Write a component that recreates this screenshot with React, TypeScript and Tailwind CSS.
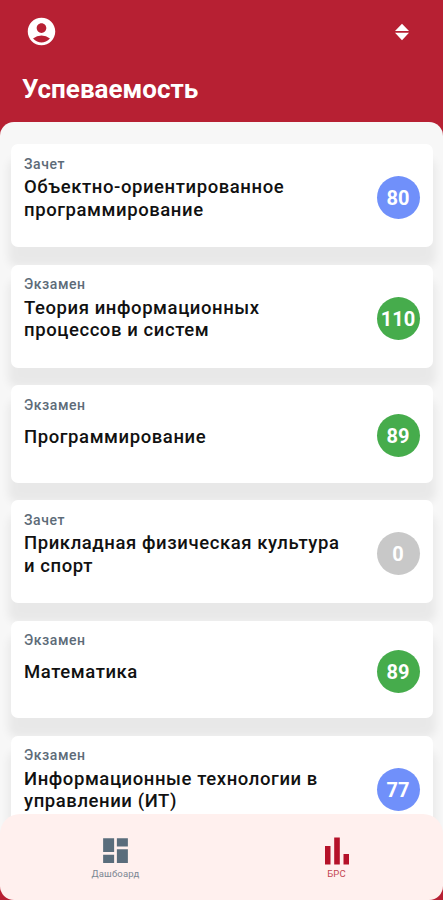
import { useState } from 'react';
import { clsx } from 'clsx';
import { MdAccountCircle, MdDashboard } from 'react-icons/md';

type Tab = 'dashboard' | 'brs';

interface Subject {
  id: number;
  control: 'Зачет' | 'Экзамен';
  lines: string[];
  score: number;
}

const subjects: Subject[] = [
  { id: 1, control: 'Зачет', lines: ['Объектно-ориентированное', 'программирование'], score: 80 },
  { id: 2, control: 'Экзамен', lines: ['Теория информационных', 'процессов и систем'], score: 110 },
  { id: 3, control: 'Экзамен', lines: ['Программирование'], score: 89 },
  { id: 4, control: 'Зачет', lines: ['Прикладная физическая культура', 'и спорт'], score: 0 },
  { id: 5, control: 'Экзамен', lines: ['Математика'], score: 89 },
  { id: 6, control: 'Экзамен', lines: ['Информационные технологии в', 'управлении (ИТ)'], score: 77 },
];

const scoreColor = (score: number) => {
  if (score === 0) return 'bg-[#c8c8c8]';
  return score > 80 ? 'bg-[#46ac4c]' : 'bg-[#7090fa]';
};

function SubjectCard({ subject }: { subject: Subject }) {
  const single = subject.lines.length === 1;

  return (
    <li
      className={clsx(
        'flex shrink-0 items-center justify-between rounded-[7px] bg-white pr-[13.5px] pl-[13px] shadow-[0_17px_8px_3px_rgba(0,0,0,0.06)]',
        single ? 'h-[97.5px]' : 'h-[103px]'
      )}
    >
      <div className="h-full pt-[10.5px]">
        <p className="text-[14px] leading-[18px] font-medium tracking-[0.57px] text-[#5d6b78]">{subject.control}</p>
        <h2 className={clsx('text-[18.5px] leading-[22.5px] font-medium tracking-[0.58px] text-[#111]', single ? 'pt-[12px]' : 'pt-[3.5px]')}>
          {subject.lines.map((line) => (
            <span key={line} className="block whitespace-nowrap">{line}</span>
          ))}
        </h2>
      </div>
      <div className={clsx('mt-[4px] flex size-[43px] shrink-0 items-center justify-center rounded-full pt-px text-[20px] leading-none font-bold text-white', scoreColor(subject.score))}>
        {subject.score}
      </div>
    </li>
  );
}

export default function App() {
  const [tab, setTab] = useState<Tab>('brs');
  const tabColor = (t: Tab) => (tab === t ? 'text-[#b51229]' : 'text-[#5a6d7c]');

  return (
    <div className="flex h-[900px] w-[443px] flex-col overflow-hidden bg-[#b72033] font-[Roboto,sans-serif]">
      <header className="h-[122px] shrink-0 pt-[15px]">
        <div className="flex items-center justify-between pl-[25px] pr-[33px]">
          <MdAccountCircle className="size-[33px] text-white" />
          <svg className="h-[18px] w-[16px]" viewBox="0 0 16 18" fill="#fff">
            <path d="M8 .7 15 8H1zM1 9.8h14L8 17.3z" />
          </svg>
        </div>
        <h1 className="pl-[22px] pt-[25px] text-[26px] leading-[32px] font-bold text-white">Успеваемость</h1>
      </header>

      <main className="min-h-0 flex-1 overflow-hidden rounded-t-[14px] bg-[#f7f7f7]">
        <ul className="flex flex-col gap-[17.5px] pt-[22px] pr-[10px] pl-[11px]">
          {subjects.map((s) => <SubjectCard key={s.id} subject={s} />)}
        </ul>
      </main>

      <nav className="relative -mt-[66px] flex h-[86px] shrink-0 rounded-t-[20px] rounded-b-[14px] bg-[#fff0ee] pt-[20px]">
        <button onClick={() => setTab('dashboard')} className={clsx('flex flex-1 flex-col items-center pl-[9px]', tabColor('dashboard'))}>
          <MdDashboard className="size-[33px]" />
          <span className="text-[9.5px] leading-[14px] tracking-[0.15px] opacity-80">Дашбоард</span>
        </button>
        <button onClick={() => setTab('brs')} className={clsx('flex flex-1 flex-col items-center pl-[8px]', tabColor('brs'))}>
          <svg className="h-[33px] w-[26px]" viewBox="0 0 26 33" fill="currentColor">
            <path d="M1 12h5.500v18.500H1zM10.200 3.500h5.600v27h-5.600zM19.500 20H25v10.500h-5.500z" />
          </svg>
          <span className="text-[9.5px] leading-[14px] tracking-[0.1px] opacity-80">БРС</span>
        </button>
      </nav>
    </div>
  );
}
